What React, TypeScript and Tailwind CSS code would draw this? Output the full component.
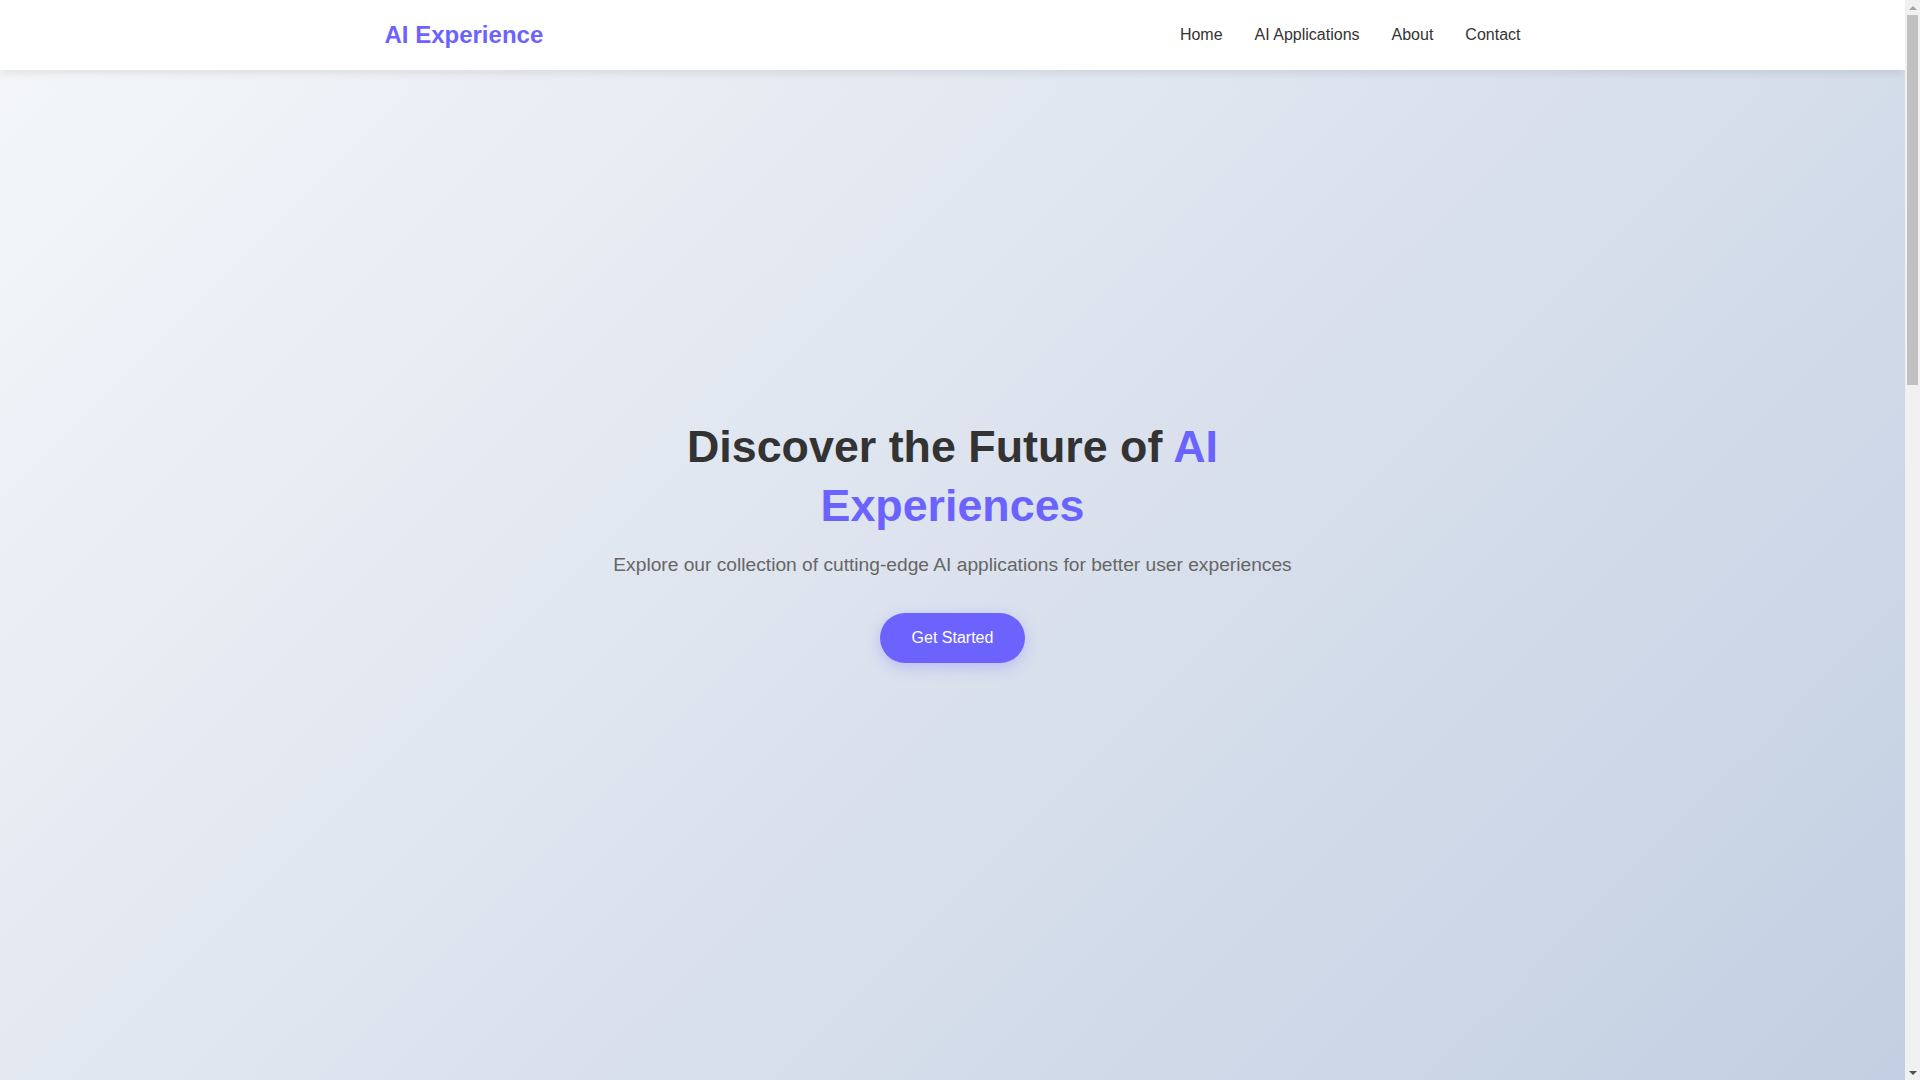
import React from "react";

const navItems = ["Home", "AI Applications", "About", "Contact"];

function FakeScrollbar() {
  return (
    <div
      aria-hidden="true"
      className="fixed top-0 right-0 z-[60] w-[15px] h-screen bg-[#f1f1f1] flex flex-col"
    >
      <div className="h-[15px] flex items-center justify-center">
        <div className="w-0 h-0 border-x-[4px] border-x-transparent border-b-[4px] border-b-[#a3a3a3]" />
      </div>
      <div className="ml-[2px] w-[11px] h-[370px] bg-[#c1c1c1]" />
      <div className="flex-1" />
      <div className="h-[15px] flex items-center justify-center">
        <div className="w-0 h-0 border-x-[4px] border-x-transparent border-t-[4px] border-t-[#505050]" />
      </div>
    </div>
  );
}

export default function App() {
  return (
    <div className="pr-[15px] font-['Liberation_Sans',Arial,sans-serif] text-[#333]">
      <FakeScrollbar />
      <div className="relative">
        <header className="absolute top-0 left-0 right-0 z-50 bg-white shadow-[0_2px_10px_rgba(0,0,0,0.1)]">
          <div className="max-w-[1200px] mx-auto px-8 h-[70px] flex items-center justify-between">
            <a href="#" className="text-[24px] font-bold text-[#6c63ff] leading-[normal]">
              AI Experience
            </a>
            <nav>
              <ul className="flex items-center gap-8">
                {navItems.map((item) => (
                  <li key={item}>
                    <a href="#" className="text-[16px] leading-[normal] text-[#333] hover:text-[#6c63ff]">
                      {item}
                    </a>
                  </li>
                ))}
              </ul>
            </nav>
          </div>
        </header>

        <section className="h-screen flex items-center justify-center bg-[linear-gradient(135deg,#f5f7fa_0%,#c3cfe2_100%)]">
          <div className="max-w-[800px] px-8 text-center flex flex-col items-center">
            <h1 className="text-[44.8px] font-bold leading-[1.3] text-[#333]">
              Discover the Future of <span className="text-[#6c63ff]">AI Experiences</span>
            </h1>
            <p className="mt-4 text-[19.2px] leading-[1.6] text-[#666]">
              Explore our collection of cutting-edge AI applications for better user experiences
            </p>
            <button className="mt-8 px-8 py-4 rounded-full bg-[#6c63ff] text-white text-[16px] leading-[normal] shadow-[0_4px_15px_rgba(108,99,255,0.3)]">
              Get Started
            </button>
          </div>
        </section>

        <section className="h-[900px] bg-white">
          <div className="max-w-[1200px] mx-auto px-8 py-20">
            <h2 className="text-[32px] font-bold text-center">AI Applications</h2>
          </div>
        </section>
        <section className="h-[500px] bg-[#f8f9fa]">
          <div className="max-w-[1200px] mx-auto px-8 py-20">
            <h2 className="text-[32px] font-bold text-center">About</h2>
          </div>
        </section>
        <section className="h-[450px] bg-white">
          <div className="max-w-[1200px] mx-auto px-8 py-20">
            <h2 className="text-[32px] font-bold text-center">Contact</h2>
          </div>
        </section>
        <footer className="h-[135px] bg-[#333] text-white flex items-center justify-center">
          <p className="text-[14px]">© 2024 AI Experience. All rights reserved.</p>
        </footer>
      </div>
    </div>
  );
}
